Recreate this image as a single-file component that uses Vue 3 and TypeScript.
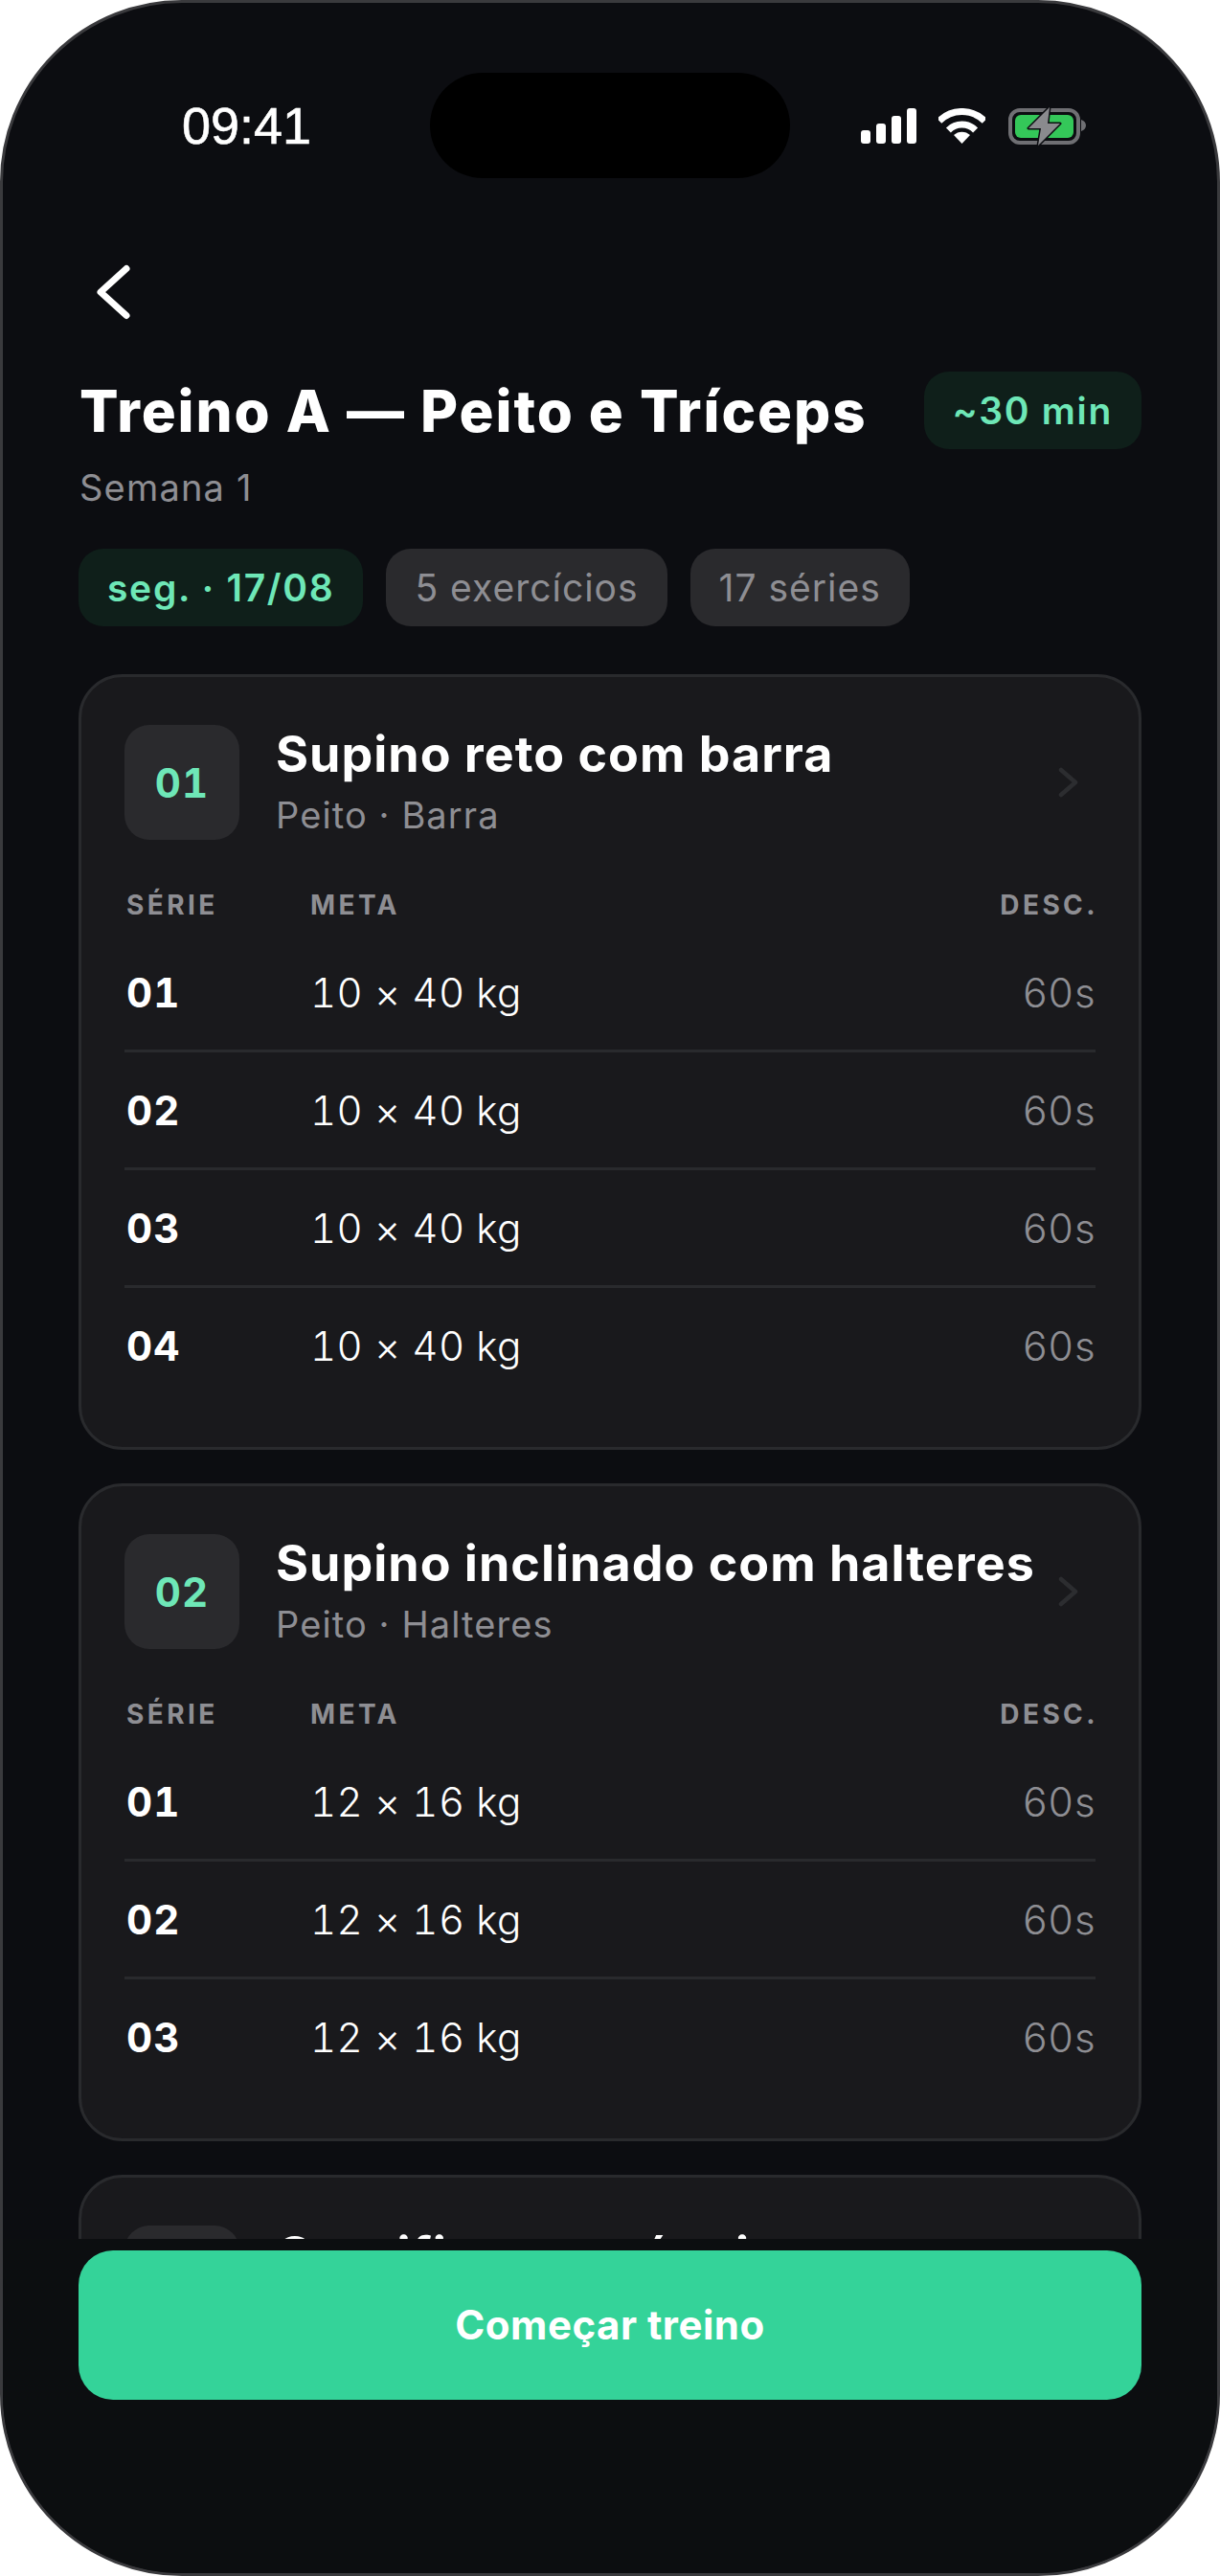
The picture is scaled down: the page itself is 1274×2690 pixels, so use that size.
<script setup lang="ts">
interface SeriesRow {
  id: string
  target: string
  rest: string
}

interface Exercise {
  index: string
  name: string
  detail: string
  rows: SeriesRow[]
}

function series(count: number, target: string): SeriesRow[] {
  return Array.from({ length: count }, (_, i) => ({
    id: String(i + 1).padStart(2, '0'),
    target,
    rest: '60s',
  }))
}

const exercises: Exercise[] = [
  { index: '01', name: 'Supino reto com barra', detail: 'Peito · Barra', rows: series(4, '10 × 40 kg') },
  { index: '02', name: 'Supino inclinado com halteres', detail: 'Peito · Halteres', rows: series(3, '12 × 16 kg') },
  { index: '03', name: 'Crucifixo na máquina', detail: 'Peito · Máquina', rows: series(3, '12 × 30 kg') },
]

const chips = ['5 exercícios', '17 séries']
</script>

<template>
  <div class="phone">
    <div class="island"></div>

    <header class="status">
      <span class="clock">09:41</span>
      <div class="status-icons">
        <svg class="signal" width="58" height="37" viewBox="0 0 58 37" fill="#fff">
          <rect x="0" y="23" width="10" height="14" rx="3" />
          <rect x="16" y="16" width="10" height="21" rx="3" />
          <rect x="32" y="8" width="10" height="29" rx="3" />
          <rect x="48" y="0" width="10" height="37" rx="3" />
        </svg>
        <svg class="wifi" width="49" height="37" viewBox="0 0 49 37">
          <g fill="none" stroke="#fff" stroke-width="7">
            <path d="M0.8 13.3 A33.5 33.5 0 0 1 48.2 13.3" />
            <path d="M10.4 22.9 A20 20 0 0 1 38.6 22.9" />
          </g>
          <path d="M24.5 37 L16 28 A12.5 12.5 0 0 1 33 28 Z" fill="#fff" />
        </svg>
        <svg class="battery" width="81" height="42" viewBox="0 -2 81 42">
          <rect x="2" y="2" width="71" height="34" rx="10" fill="none" stroke="#6f6f73" stroke-width="4" />
          <rect x="7" y="7" width="61" height="24" rx="6" fill="#34c759" />
          <path d="M76 12 C79 13 81 15 81 18 C81 21 79 23 76 24 Z" fill="#6f6f73" />
          <path
            d="M43 -1 L21 21 L34 21 L31 39 L54 16 L41 16 Z"
            fill="#8a8a8e"
            stroke="#0c0d11"
            stroke-width="3"
            stroke-linejoin="round"
            paint-order="stroke"
          />
        </svg>
      </div>
    </header>

    <nav class="nav">
      <svg width="44" height="68" viewBox="0 0 44 68" fill="none">
        <path d="M35 9.5 L8 34 L35 58.5" stroke="#fff" stroke-width="7" stroke-linecap="round" stroke-linejoin="round" />
      </svg>
    </nav>

    <section class="heading">
      <div class="title-row">
        <h1 class="title">Treino A — Peito e Tríceps</h1>
        <span class="chip chip-green duration">~30 min</span>
      </div>
      <p class="week">Semana 1</p>
      <div class="chips">
        <span class="chip chip-green">seg. · 17/08</span>
        <span v-for="chip in chips" :key="chip" class="chip">{{ chip }}</span>
      </div>
    </section>

    <main class="list">
      <article v-for="ex in exercises" :key="ex.index" class="card">
        <div class="card-head">
          <div class="index">{{ ex.index }}</div>
          <div class="card-text">
            <h2 class="card-name">{{ ex.name }}</h2>
            <p class="card-detail">{{ ex.detail }}</p>
          </div>
          <svg class="chevron" width="22" height="34" viewBox="0 0 22 34" fill="none">
            <path d="M3 4 L18 17 L3 30" stroke="#2c2d30" stroke-width="4.5" stroke-linecap="round" stroke-linejoin="round" />
          </svg>
        </div>
        <div class="table-head">
          <span class="col-id">SÉRIE</span>
          <span class="col-target">META</span>
          <span class="col-rest">DESC.</span>
        </div>
        <div v-for="row in ex.rows" :key="row.id" class="row">
          <span class="col-id row-id">{{ row.id }}</span>
          <span class="col-target row-target">{{ row.target }}</span>
          <span class="col-rest row-rest">{{ row.rest }}</span>
        </div>
      </article>
    </main>

    <footer class="footer">
      <button class="start" type="button">Começar treino</button>
    </footer>
  </div>
</template>

<style>
html,
body {
  margin: 0;
  background: #fff;
}
</style>

<style scoped>
.phone {
  position: relative;
  box-sizing: border-box;
  width: 1274px;
  height: 2690px;
  display: flex;
  flex-direction: column;
  overflow: hidden;
  border: 3px solid #3a3a3d;
  border-radius: 190px;
  background: #0c0d11;
  color: #fff;
  font-family: Inter, "Noto Sans", sans-serif;
}

.island {
  position: absolute;
  left: 446px;
  top: 73px;
  width: 376px;
  height: 110px;
  border-radius: 55px;
  background: #000;
}

.status {
  flex: none;
  box-sizing: border-box;
  height: 210px;
  padding: 102px 0 0 187px;
  display: flex;
  justify-content: space-between;
}

.clock {
  font-family: "Liberation Sans", Arial, sans-serif;
  font-size: 54px;
  line-height: 52px;
  -webkit-text-stroke: 0.6px #fff;
}

.status-icons {
  display: flex;
  align-items: flex-start;
  margin-top: 8px;
  margin-right: 137px;
}

.wifi {
  margin-left: 23px;
}

.battery {
  margin-left: 24px;
  margin-top: -2px;
}

.nav {
  flex: none;
  height: 68px;
  padding: 58px 0 0 94px;
}

.nav svg {
  display: block;
}

.heading {
  flex: none;
  padding: 49px 79px 0;
}

.title-row {
  display: flex;
  align-items: center;
  justify-content: space-between;
}

.title {
  margin: 0 0 0 1px;
  font-size: 60px;
  line-height: 80px;
  font-weight: 800;
  letter-spacing: 1.95px;
  white-space: nowrap;
}

.week {
  margin: 17px 0 0 1px;
  font-size: 38px;
  line-height: 46px;
  letter-spacing: 1.2px;
  color: #8e8e93;
}

.chips {
  display: flex;
  gap: 24px;
  margin-top: 41px;
}

.chip {
  box-sizing: border-box;
  height: 81px;
  padding: 0 30px;
  display: inline-flex;
  align-items: center;
  border-radius: 26px;
  background: #2a2a2d;
  font-size: 39px;
  letter-spacing: 1px;
  color: #8e8e93;
  white-space: nowrap;
}

.chip-green {
  background: #0f1f1a;
  color: #6ee7b7;
  font-weight: 600;
  letter-spacing: 1.7px;
}

.list {
  flex: 1;
  min-height: 0;
  overflow: hidden;
  padding: 50px 79px 0;
  display: flex;
  flex-direction: column;
  gap: 35px;
}

.card {
  flex: none;
  padding: 50px 45px 46px;
  border: 3px solid #292a2d;
  border-radius: 46px;
  background: #19191c;
}

.card-head {
  display: flex;
  align-items: center;
}

.index {
  flex: none;
  width: 120px;
  height: 120px;
  display: flex;
  align-items: center;
  justify-content: center;
  border-radius: 26px;
  background: #2a2a2d;
  font-size: 42px;
  font-weight: 700;
  font-variant-numeric: tabular-nums;
  letter-spacing: 1px;
  color: #6ee7b7;
}

.card-text {
  flex: 1;
  min-width: 0;
  margin-left: 38px;
  padding-bottom: 3px;
}

.card-name {
  margin: 0;
  font-size: 52px;
  line-height: 62px;
  font-weight: 700;
  letter-spacing: 1px;
  white-space: nowrap;
}

.card-detail {
  margin: 9px 0 0;
  font-size: 38px;
  line-height: 46px;
  letter-spacing: 1.1px;
  color: #8e8e93;
}

.chevron {
  flex: none;
  margin-right: 17px;
}

.table-head {
  display: flex;
  align-items: center;
  height: 44px;
  margin: 46px 0 9px;
  font-size: 28px;
  font-weight: 700;
  letter-spacing: 3.4px;
  color: #8e8e93;
}

.table-head .col-rest {
  margin-right: -3px;
}

.row {
  display: flex;
  align-items: center;
  height: 120px;
  border-bottom: 3px solid #292a2d;
  font-size: 42px;
}

.row:last-child {
  border-bottom: 0;
}

.col-id {
  box-sizing: border-box;
  width: 194px;
  padding-left: 2px;
  flex: none;
}

.col-target {
  flex: 1;
}

.col-rest {
  flex: none;
}

.row-id {
  font-weight: 700;
  font-variant-numeric: tabular-nums;
  letter-spacing: 1px;
}

.row-target {
  font-weight: 350;
  font-variant-numeric: tabular-nums;
  letter-spacing: 0.45px;
}

.row-rest {
  font-weight: 300;
  letter-spacing: 1.3px;
  margin-right: -1px;
  color: #8e8e93;
}

.footer {
  flex: none;
  height: 349px;
  padding: 12px 79px 0;
  box-sizing: border-box;
  background: #0c0e10;
}

.start {
  display: block;
  width: 100%;
  height: 156px;
  padding: 0 0 2px;
  border: 0;
  border-radius: 36px;
  background: #34d399;
  color: #fff;
  font-family: inherit;
  font-size: 42px;
  font-weight: 700;
  letter-spacing: 0.5px;
}
</style>
